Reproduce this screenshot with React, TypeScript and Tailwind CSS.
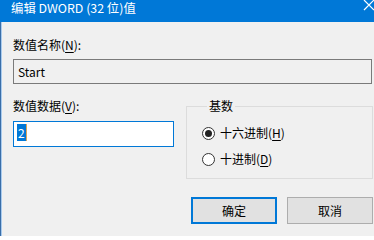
const FONT = "font-['Noto_Sans_CJK_SC','Noto_Sans',sans-serif]";

function Radio({ checked, label, hotkey }: { checked: boolean; label: string; hotkey: string }) {
  return (
    <div className="flex items-center h-[16px] leading-[16px]">
      <span className="w-[13px] h-[13px] rounded-full border border-[#333] bg-white flex items-center justify-center">
        {checked && <span className="w-[7px] h-[7px] rounded-full bg-[#222]" />}
      </span>
      <span className="ml-[5px]">
        {label}(<span className="underline underline-offset-2">{hotkey}</span>)
      </span>
    </div>
  );
}

export default function App() {
  return (
    <div className={`w-[374px] h-[236px] overflow-hidden bg-[#f0f0f0] text-[12px] text-black flex flex-col ${FONT}`}>
      {/* title bar */}
      <div className="h-[22px] shrink-0 bg-[#0078d7] text-white flex items-start justify-between pl-[11px] pt-[1px] leading-[14px]">
        <span className="text-[12.4px]">编辑 DWORD (32 位)值</span>
        <svg width="12" height="11" viewBox="0 0 12 11" className="-mt-[1px]">
          <path d="M2 0 L12 10 M12 0 L2 10" stroke="white" strokeWidth="1.2" fill="none" />
        </svg>
      </div>

      <div className="flex flex-1">
        <div className="w-[1px] bg-[#3a6ea8]" />
        <div className="w-[1px] bg-[#a9cbee]" />

        <div className="flex-1 flex flex-col pl-[11px]">
          <div className="mt-[15px] leading-[16px]">
            数值名称(<span className="underline underline-offset-2">N</span>):
          </div>
          <div className="mt-[6px] mr-[2px] h-[25px] border border-[#7a7a7a] bg-[#f0f0f0] flex items-center pl-[4px]">
            Start
          </div>

          <div className="flex items-start">
            <div className="w-[161px] flex flex-col">
              <div className="mt-[14px] leading-[16px]">
                数值数据(<span className="underline underline-offset-2">V</span>):
              </div>
              <div className="mt-[7px] h-[26px] border border-[#0078d7] bg-white pl-[3px] pt-[2px] flex items-start">
                <span className="h-[17px] px-[1px] bg-[#0078d7] text-white leading-[17px]">2</span>
                <span className="w-[1px] h-[17px] bg-[#d9a35a]" />
              </div>
            </div>

            <fieldset className="ml-[12px] mt-[14px] mr-[1px] flex-1 border border-[#dcdcdc] pl-[15px] pb-[11px]">
              <legend className="ml-[5px] px-[2px] leading-[16px]">基数</legend>
              <div className="mt-[11px] flex flex-col gap-[10px]">
                <Radio checked label="十六进制" hotkey="H" />
                <Radio checked={false} label="十进制" hotkey="D" />
              </div>
            </fieldset>
          </div>

          <div className="mt-[18px] mr-[1px] flex justify-end gap-[10px]">
            <button className="w-[86px] h-[27px] border-2 border-[#0078d7] bg-[#e1e1e1] leading-[16px]">
              确定
            </button>
            <button className="w-[86px] h-[27px] border border-[#adadad] bg-[#e1e1e1] leading-[16px]">
              取消
            </button>
          </div>
        </div>
      </div>
    </div>
  );
}
